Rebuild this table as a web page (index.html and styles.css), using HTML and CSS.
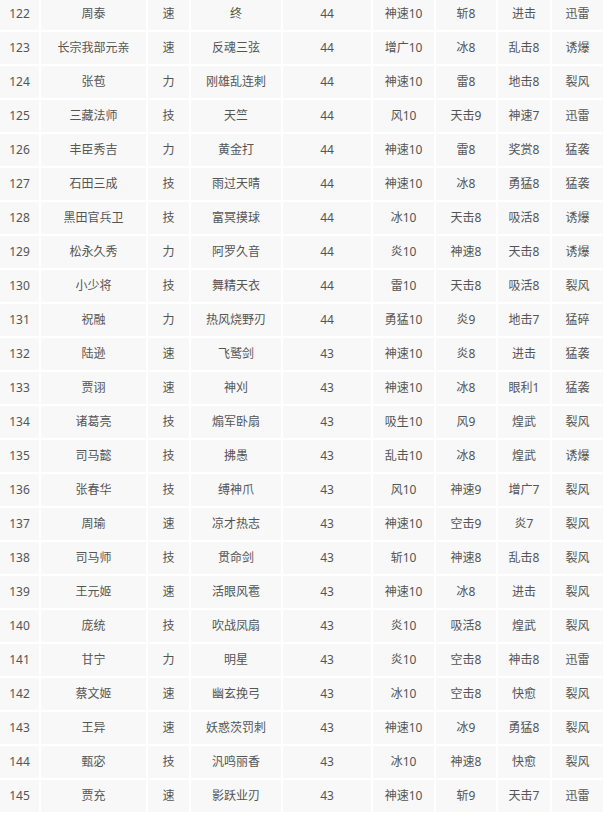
FILE: index.html
```html
<!DOCTYPE html>
<html lang="zh-CN">
<head>
<meta charset="utf-8">
<title>武将列表</title>
<link rel="stylesheet" href="styles.css">
</head>
<body>
<table class="list">
<colgroup>
<col class="c1"><col class="c2"><col class="c3"><col class="c4"><col class="c5"><col class="c6"><col class="c7"><col class="c8"><col class="c9">
</colgroup>
<tbody>
<tr><td>122</td><td>周泰</td><td>速</td><td>终</td><td>44</td><td>神速10</td><td>斩8</td><td>进击</td><td>迅雷</td></tr>
<tr><td>123</td><td>长宗我部元亲</td><td>速</td><td>反魂三弦</td><td>44</td><td>增广10</td><td>冰8</td><td>乱击8</td><td>诱爆</td></tr>
<tr><td>124</td><td>张苞</td><td>力</td><td>刚雄乱连刺</td><td>44</td><td>神速10</td><td>雷8</td><td>地击8</td><td>裂风</td></tr>
<tr><td>125</td><td>三藏法师</td><td>技</td><td>天竺</td><td>44</td><td>风10</td><td>天击9</td><td>神速7</td><td>迅雷</td></tr>
<tr><td>126</td><td>丰臣秀吉</td><td>力</td><td>黄金打</td><td>44</td><td>神速10</td><td>雷8</td><td>奖赏8</td><td>猛袭</td></tr>
<tr><td>127</td><td>石田三成</td><td>技</td><td>雨过天晴</td><td>44</td><td>神速10</td><td>冰8</td><td>勇猛8</td><td>猛袭</td></tr>
<tr><td>128</td><td>黑田官兵卫</td><td>技</td><td>富冥摸球</td><td>44</td><td>冰10</td><td>天击8</td><td>吸活8</td><td>诱爆</td></tr>
<tr><td>129</td><td>松永久秀</td><td>力</td><td>阿罗久音</td><td>44</td><td>炎10</td><td>神速8</td><td>天击8</td><td>诱爆</td></tr>
<tr><td>130</td><td>小少将</td><td>技</td><td>舞精天衣</td><td>44</td><td>雷10</td><td>天击8</td><td>吸活8</td><td>裂风</td></tr>
<tr><td>131</td><td>祝融</td><td>力</td><td>热风烧野刃</td><td>44</td><td>勇猛10</td><td>炎9</td><td>地击7</td><td>猛碎</td></tr>
<tr><td>132</td><td>陆逊</td><td>速</td><td>飞鹫剑</td><td>43</td><td>神速10</td><td>炎8</td><td>进击</td><td>猛袭</td></tr>
<tr><td>133</td><td>贾诩</td><td>速</td><td>神刈</td><td>43</td><td>神速10</td><td>冰8</td><td>眼利1</td><td>猛袭</td></tr>
<tr><td>134</td><td>诸葛亮</td><td>技</td><td>煽军卧扇</td><td>43</td><td>吸生10</td><td>风9</td><td>煌武</td><td>裂风</td></tr>
<tr><td>135</td><td>司马懿</td><td>技</td><td>拂愚</td><td>43</td><td>乱击10</td><td>冰8</td><td>煌武</td><td>诱爆</td></tr>
<tr><td>136</td><td>张春华</td><td>技</td><td>缚神爪</td><td>43</td><td>风10</td><td>神速9</td><td>增广7</td><td>裂风</td></tr>
<tr><td>137</td><td>周瑜</td><td>速</td><td>凉才热志</td><td>43</td><td>神速10</td><td>空击9</td><td>炎7</td><td>裂风</td></tr>
<tr><td>138</td><td>司马师</td><td>技</td><td>贯命剑</td><td>43</td><td>斩10</td><td>神速8</td><td>乱击8</td><td>裂风</td></tr>
<tr><td>139</td><td>王元姬</td><td>速</td><td>活眼风雹</td><td>43</td><td>神速10</td><td>冰8</td><td>进击</td><td>裂风</td></tr>
<tr><td>140</td><td>庞统</td><td>技</td><td>吹战凤扇</td><td>43</td><td>炎10</td><td>吸活8</td><td>煌武</td><td>裂风</td></tr>
<tr><td>141</td><td>甘宁</td><td>力</td><td>明星</td><td>43</td><td>炎10</td><td>空击8</td><td>神击8</td><td>迅雷</td></tr>
<tr><td>142</td><td>蔡文姬</td><td>速</td><td>幽玄挽弓</td><td>43</td><td>冰10</td><td>空击8</td><td>快愈</td><td>裂风</td></tr>
<tr><td>143</td><td>王异</td><td>速</td><td>妖惑茨罚刺</td><td>43</td><td>神速10</td><td>冰9</td><td>勇猛8</td><td>裂风</td></tr>
<tr><td>144</td><td>甄宓</td><td>技</td><td>汎鸣丽香</td><td>43</td><td>冰10</td><td>神速8</td><td>快愈</td><td>裂风</td></tr>
<tr><td>145</td><td>贾充</td><td>速</td><td>影跃业刃</td><td>43</td><td>神速10</td><td>斩9</td><td>天击7</td><td>迅雷</td></tr>
</tbody>
</table>
</body>
</html>
```
FILE: styles.css
```css
html, body {
  margin: 0;
  padding: 0;
  background: #ffffff;
}

body {
  font-family: "Noto Sans", "Noto Sans CJK SC", "Microsoft YaHei", sans-serif;
  font-size: 12px;
  color: #555555;
}

.list {
  border-collapse: separate;
  border-spacing: 2px;
  table-layout: fixed;
  width: 607px;
  margin: -4px 0 0 -2px;
}

.list td {
  background: #f8f8f8;
  height: 32px;
  padding: 0;
  text-align: center;
  vertical-align: middle;
  line-height: 32px;
  white-space: nowrap;
  overflow: hidden;
}

.c1 { width: 39px; }
.c2 { width: 105px; }
.c3 { width: 41px; }
.c4 { width: 90px; }
.c5 { width: 88px; }
.c6 { width: 61px; }
.c7 { width: 60px; }
.c8 { width: 52px; }
.c9 { width: 51px; }
```
